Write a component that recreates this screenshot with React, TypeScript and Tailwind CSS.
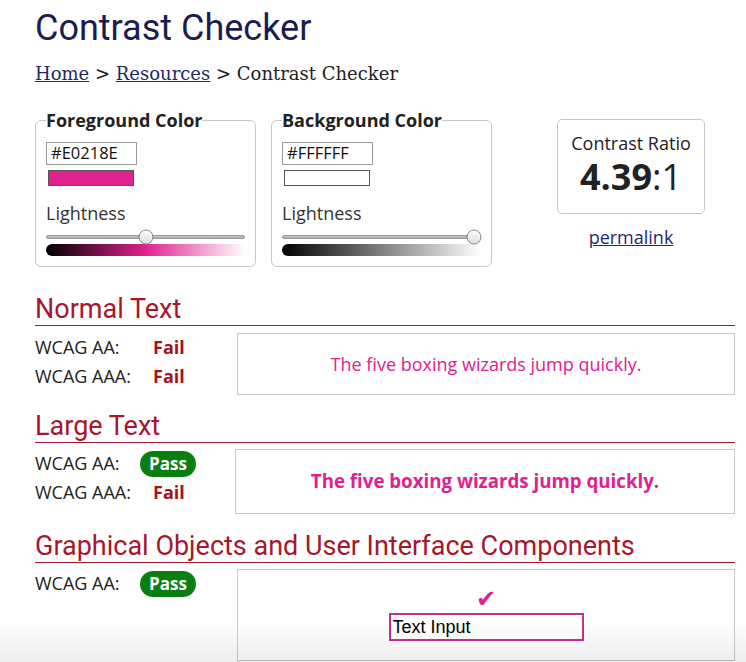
import React from 'react';

const sans = "font-['Open_Sans','Liberation_Sans',sans-serif]";
const head = "font-['Roboto','Liberation_Sans',sans-serif]";

const ColorPicker = ({ label, hex, swatch, thumb, gradient }: { label: string; hex: string; swatch: string; thumb: number; gradient: string }) => (
  <fieldset className="w-[221px] rounded-[6px] border border-[#c8c8c8] px-[10px] pb-[10px]">
    <legend className="text-[18px] leading-[22px] font-bold text-[#222]">{label}</legend>
    <input
      readOnly
      value={hex}
      className={`mt-[11px] block h-[23px] w-[91px] border border-[#999] px-[4px] text-[16.5px] text-[#111] outline-none ${sans}`}
    />
    <div className="ml-[2px] mt-[5px] h-[16px] w-[86px] border border-[#555]" style={{ background: swatch }} />
    <div className="mt-[15px] text-[18px] leading-[24px] text-[#333]">Lightness</div>
    <div className="relative mt-[10px] h-[4px] rounded-full border border-[#999] bg-gradient-to-b from-[#ccc] to-[#aaa]">
      <div
        className="absolute top-1/2 h-[15px] w-[15px] -translate-x-1/2 -translate-y-1/2 rounded-full border border-[#888] bg-gradient-to-b from-white to-[#ddd]"
        style={{ left: `${thumb}%` }}
      />
    </div>
    <div className="mt-[5px] h-[12px] rounded-l-[6px]" style={{ background: gradient }} />
  </fieldset>
);

const Status = ({ pass }: { pass: boolean }) =>
  pass ? (
    <span className="inline-block rounded-full bg-[#0a7f10] px-[9px] text-[17px] leading-[26px] font-bold text-white">Pass</span>
  ) : (
    <span className="pl-[13px] text-[18px] font-bold text-[#a80f1c]">Fail</span>
  );

const Row = ({ label, pass }: { label: string; pass: boolean }) => (
  <div className="flex h-[29px] items-center">
    <span className="w-[105px] text-[18px] text-[#222]">{label}</span>
    <Status pass={pass} />
  </div>
);

const Section = ({ title, children }: { title: string; children: React.ReactNode }) => (
  <div>
    <h2 className={`border-b border-[#9e1b32] text-[27px] leading-[31px] text-[#a8162b] ${head}`}>{title}</h2>
    {children}
  </div>
);

export default function App() {
  return (
    <div className={`relative h-[662px] w-[746px] overflow-hidden bg-white ${sans}`}>
      <div className="ml-[35px] w-[700px] pt-[7px]">
        <h1 className={`text-[36px] leading-[42px] text-[#1c1c50] ${head}`}>Contrast Checker</h1>
        <div className="mt-[14px] font-['DejaVu_Serif',serif] text-[18px] leading-[22px] text-[#222]">
          <a className="text-[#1f2a6b] underline">Home</a> &gt; <a className="text-[#1f2a6b] underline">Resources</a> &gt; Contrast Checker
        </div>

        <div className="mt-[24px] flex items-start">
          <ColorPicker
            label="Foreground Color"
            hex="#E0218E"
            swatch="#E0218E"
            thumb={50}
            gradient="linear-gradient(to right, #000, #E0218E 50%, #fff)"
          />
          <div className="ml-[15px]">
            <ColorPicker
              label="Background Color"
              hex="#FFFFFF"
              swatch="#FFFFFF"
              thumb={97}
              gradient="linear-gradient(to right, #000, #fff)"
            />
          </div>
          <div className="ml-[65px] mt-[10px] flex flex-col items-center">
            <div className="flex h-[95px] w-[148px] flex-col items-center rounded-[5px] border border-[#c8c8c8] pt-[11px]">
              <div className="text-[18px] leading-[24px] text-[#222]">Contrast Ratio</div>
              <div className="mt-[2px] text-[36px] leading-[40px] text-[#222]">
                <span className="font-bold">4.39</span>:1
              </div>
            </div>
            <a className="mt-[10px] text-[18px] text-[#1f2a6b] underline">permalink</a>
          </div>
        </div>

        <div className="mt-[27px] flex flex-col gap-[16px]">
          <Section title="Normal Text">
            <div className="mt-[7px] flex">
              <div className="w-[202px]">
                <Row label="WCAG AA:" pass={false} />
                <Row label="WCAG AAA:" pass={false} />
              </div>
              <div className="flex h-[62px] flex-1 items-center justify-center border border-[#c8c8c8] text-[18px] text-[#E0218E]">
                The five boxing wizards jump quickly.
              </div>
            </div>
          </Section>
          <Section title="Large Text">
            <div className="mt-[6px] flex">
              <div className="w-[200px]">
                <Row label="WCAG AA:" pass={true} />
                <Row label="WCAG AAA:" pass={false} />
              </div>
              <div className="flex h-[65px] flex-1 items-center justify-center border border-[#c8c8c8] text-[18.7px] font-bold text-[#E0218E]">
                The five boxing wizards jump quickly.
              </div>
            </div>
          </Section>
          <div className="mt-[1px]">
            <Section title="Graphical Objects and User Interface Components">
              <div className="mt-[6px] flex">
                <div className="w-[202px]">
                  <Row label="WCAG AA:" pass={true} />
                </div>
                <div className="flex h-[92px] flex-1 flex-col items-center border border-[#c8c8c8] pt-[16px]">
                  <span className="font-['DejaVu_Sans',sans-serif] text-[24px] leading-[26px] text-[#E0218E]">✔</span>
                  <input
                    readOnly
                    value="Text Input"
                    className="mt-[1px] h-[28px] w-[195px] border-2 border-[#c5308a] px-[2px] font-['Liberation_Sans',sans-serif] text-[18px] text-black outline-none"
                  />
                </div>
              </div>
            </Section>
          </div>
        </div>
      </div>
      <div className="pointer-events-none absolute bottom-0 left-0 h-[40px] w-full bg-gradient-to-b from-transparent to-[rgba(0,0,0,0.07)]" />
    </div>
  );
}
